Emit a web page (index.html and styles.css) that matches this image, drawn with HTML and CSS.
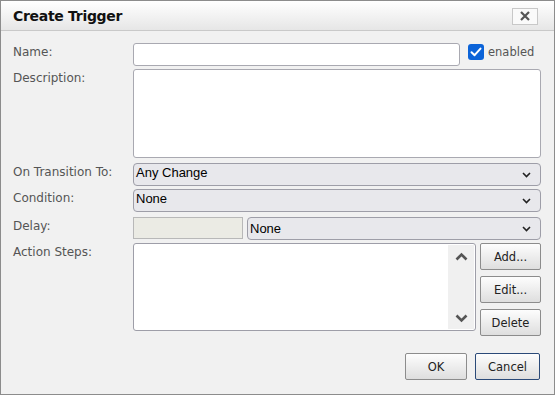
FILE: index.html
```html
<!DOCTYPE html>
<html>
<head>
<meta charset="utf-8">
<link rel="stylesheet" href="styles.css">
</head>
<body>
<div class="dialog">
  <div class="titlebar">
    <span class="title">Create Trigger</span>
    <span class="close"><svg width="12" height="10" viewBox="0 0 12 10"><path d="M2 1 L10 9 M10 1 L2 9" stroke="#555" stroke-width="2.2" fill="none"/></svg></span>
  </div>
  <div class="body">
    <div class="row r-name">
      <label class="lbl">Name:</label>
      <div class="field name-field">
        <div class="input name-input"></div>
        <span class="check"><svg width="16" height="16" viewBox="0 0 16 16"><rect x="0" y="0" width="16" height="16" rx="3" fill="#0b63d8"/><path d="M3.5 8.2 L6.6 11.2 L12.5 4.6" stroke="#fff" stroke-width="2" fill="none" stroke-linecap="round" stroke-linejoin="round"/></svg></span>
        <span class="check-lbl">enabled</span>
      </div>
    </div>
    <div class="row r-desc">
      <label class="lbl">Description:</label>
      <div class="input textarea"></div>
    </div>
    <div class="row r-trans">
      <label class="lbl">On Transition To:</label>
      <div class="select"><span>Any Change</span><svg class="chev" width="9" height="6" viewBox="0 0 9 6"><path d="M1 1 L4.5 4.5 L8 1" stroke="#222" stroke-width="1.6" fill="none"/></svg></div>
    </div>
    <div class="row r-cond">
      <label class="lbl">Condition:</label>
      <div class="select"><span>None</span><svg class="chev" width="9" height="6" viewBox="0 0 9 6"><path d="M1 1 L4.5 4.5 L8 1" stroke="#222" stroke-width="1.6" fill="none"/></svg></div>
    </div>
    <div class="row r-delay">
      <label class="lbl">Delay:</label>
      <div class="delay">
        <div class="input disabled"></div>
        <div class="select"><span>None</span><svg class="chev" width="9" height="6" viewBox="0 0 9 6"><path d="M1 1 L4.5 4.5 L8 1" stroke="#222" stroke-width="1.6" fill="none"/></svg></div>
      </div>
    </div>
    <div class="row r-steps">
      <label class="lbl">Action Steps:</label>
      <div class="steps">
        <div class="list">
          <div class="scroll">
            <svg width="13" height="9" viewBox="0 0 13 9"><path d="M1.5 7.5 L6.5 2.5 L11.5 7.5" stroke="#555" stroke-width="2.6" fill="none"/></svg>
            <svg width="13" height="9" viewBox="0 0 13 9"><path d="M1.5 1.5 L6.5 6.5 L11.5 1.5" stroke="#555" stroke-width="2.6" fill="none"/></svg>
          </div>
        </div>
        <div class="side">
          <button class="btn">Add...</button>
          <button class="btn">Edit...</button>
          <button class="btn">Delete</button>
        </div>
      </div>
    </div>
    <div class="footer">
      <button class="btn ok">OK</button>
      <button class="btn cancel">Cancel</button>
    </div>
  </div>
</div>
</body>
</html>
```

FILE: styles.css
```css
html, body {
  margin: 0;
  padding: 0;
  background: #f1f1f1;
}
.dialog {
  width: 555px;
  height: 395px;
  box-sizing: border-box;
  border: 1px solid #8c8c8c;
  background: #f1f1f1;
  font-family: "DejaVu Sans", Verdana, sans-serif;
  font-size: 12px;
  color: #555;
  display: flex;
  flex-direction: column;
}
.titlebar {
  height: 30px;
  box-sizing: border-box;
  border-bottom: 1px solid #c9c9c9;
  background: linear-gradient(#ffffff, #e6e6e6);
  display: flex;
  align-items: center;
  justify-content: space-between;
  padding: 0 16px 0 12px;
}
.title {
  font-weight: bold;
  font-size: 14px;
  color: #111;
  letter-spacing: -0.3px;
}
.close {
  width: 26px;
  height: 17px;
  box-sizing: border-box;
  border: 1px solid #c8c8c8;
  background: #fafafa;
  display: flex;
  align-items: center;
  justify-content: center;
  margin-top: 1px;
}
.body {
  flex: 1;
  padding: 12px 13px 0 12px;
  display: flex;
  flex-direction: column;
}
.row {
  display: grid;
  grid-template-columns: 120px 1fr;
}
.lbl {
  padding-top: 2px;
  line-height: 15px;
}
.input {
  background: #fff;
  border: 1px solid #a9a9b1;
  border-radius: 3px;
  box-sizing: border-box;
}
.name-field {
  display: flex;
  align-items: center;
}
.name-input {
  width: 327px;
  height: 23px;
}
.check {
  margin-left: 8px;
  width: 16px;
  height: 16px;
  display: flex;
  margin-top: -5px;
}
.check-lbl {
  margin-left: 4px;
  font-size: 11.5px;
  color: #555;
  margin-top: -5px;
}
.r-desc { margin-top: 3px; }
.textarea {
  height: 89px;
}
.r-trans { margin-top: 5px; }
.r-cond { margin-top: 3px; }
.r-delay { margin-top: 5px; }
.r-steps { margin-top: 3px; }
.select {
  height: 23px;
  box-sizing: border-box;
  border: 1px solid #9e9ea8;
  border-radius: 4px;
  background: #e8e8ec;
  display: flex;
  align-items: center;
  justify-content: space-between;
  padding: 0 9px 0 2px;
  font-family: "Liberation Sans", Arial, sans-serif;
  font-size: 13px;
  color: #000;
}
.r-trans .select span, .r-cond .select span { margin-top: -5px; }
.delay {
  display: flex;
  gap: 4px;
}
.delay .disabled {
  width: 110px;
  height: 22px;
  background: #ebebe4;
  border-color: #b8b8b8;
  border-radius: 0;
}
.delay .select { flex: 1; }
.steps {
  display: flex;
  gap: 4px;
}
.list {
  flex: 1;
  height: 88px;
  box-sizing: border-box;
  background: #fff;
  border: 1px solid #9e9ea8;
  border-radius: 3px;
  display: flex;
  justify-content: flex-end;
  padding: 1px;
}
.scroll {
  width: 26px;
  background: #f0f0f0;
  display: flex;
  flex-direction: column;
  justify-content: space-between;
  align-items: center;
  padding: 7px 0 6px;
}
.side {
  display: flex;
  flex-direction: column;
  gap: 6px;
}
.btn {
  width: 61px;
  height: 27px;
  box-sizing: border-box;
  border: 1px solid #8c8c8c;
  border-radius: 2px;
  background: linear-gradient(#fdfdfd, #dedede);
  font-family: "DejaVu Sans", Verdana, sans-serif;
  font-size: 11.5px;
  color: #222;
  padding: 0;
}
.footer {
  display: flex;
  justify-content: flex-end;
  gap: 8px;
  margin-top: 17px;
  padding-right: 1px;
}
.ok { width: 62px; }
.cancel { width: 65px; border-color: #2b4a78; }
```
